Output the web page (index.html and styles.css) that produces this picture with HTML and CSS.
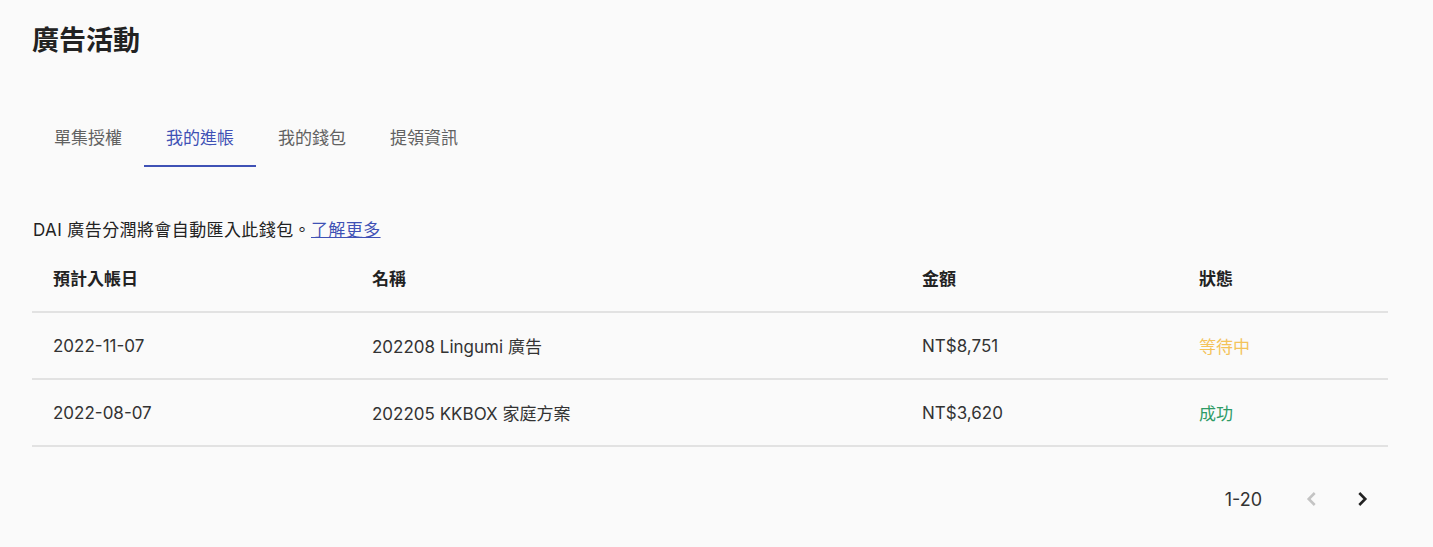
FILE: index.html
```html
<!DOCTYPE html>
<html lang="zh-Hant">
<head>
    <meta charset="UTF-8">
    <meta name="viewport" content="width=device-width, initial-scale=1.0">
    <title>廣告活動</title>
    <link rel="stylesheet" href="styles.css">
</head>
<body>
    <div class="page">
        <h1 class="page-title">廣告活動</h1>

        <nav class="tabs">
            <a class="tab">單集授權</a>
            <a class="tab active">我的進帳</a>
            <a class="tab">我的錢包</a>
            <a class="tab">提領資訊</a>
        </nav>

        <p class="notice">DAI 廣告分潤將會自動匯入此錢包。<a class="more-link" href="#">了解更多</a></p>

        <table class="income-table">
            <colgroup>
                <col class="col-date">
                <col class="col-name">
                <col class="col-amount">
                <col class="col-status">
            </colgroup>
            <thead>
                <tr>
                    <th>預計入帳日</th>
                    <th>名稱</th>
                    <th>金額</th>
                    <th>狀態</th>
                </tr>
            </thead>
            <tbody>
                <tr>
                    <td>2022-11-07</td>
                    <td>202208 Lingumi 廣告</td>
                    <td>NT$8,751</td>
                    <td class="status pending">等待中</td>
                </tr>
                <tr>
                    <td>2022-08-07</td>
                    <td>202205 KKBOX 家庭方案</td>
                    <td>NT$3,620</td>
                    <td class="status success">成功</td>
                </tr>
            </tbody>
        </table>

        <div class="pagination">
            <span class="page-range">1-20</span>
            <button class="page-btn" disabled>
                <svg viewBox="0 0 24 24" width="26" height="26"><path d="M14.5 6.5L9 12l5.5 5.5"/></svg>
            </button>
            <button class="page-btn">
                <svg viewBox="0 0 24 24" width="26" height="26"><path d="M9.5 6.5L15 12l-5.5 5.5"/></svg>
            </button>
        </div>
    </div>
</body>
</html>
```

FILE: styles.css
```css
body {
    margin: 0;
    background: #fafafa;
    color: #333;
    font-family: Inter, "Noto Sans CJK TC", sans-serif;
    font-size: 17px;
}

.page {
    padding: 25px 45px 0 32px;
}

.page-title {
    margin: 0;
    font-size: 27px;
    line-height: 32px;
    font-weight: 700;
    color: #222;
}

.tabs {
    display: flex;
    margin-top: 50px;
    height: 60px;
}

.tab {
    width: 112px;
    display: flex;
    align-items: center;
    justify-content: center;
    color: #616161;
    border-bottom: 2px solid transparent;
    box-sizing: border-box;
    cursor: pointer;
}

.tab.active {
    color: #3f51b5;
    border-bottom-color: #3f51b5;
}

.notice {
    margin: 51px 0 0 1px;
    line-height: 24px;
    color: #222;
    letter-spacing: 0.4px;
}

.more-link {
    color: #3f51b5;
    text-decoration: underline;
}

.income-table {
    width: 100%;
    border-collapse: collapse;
    margin-top: 1px;
}

.col-date { width: 319px; }
.col-name { width: 550px; }
.col-amount { width: 277px; }

.income-table th,
.income-table td {
    text-align: left;
    padding: 0 0 0 21px;
    border-bottom: 2px solid #e2e2e2;
}

.income-table th {
    height: 68px;
    font-weight: 700;
    color: #222;
}

.income-table td {
    height: 65px;
    color: #333;
}

.status.pending {
    color: #f4c35a;
}

.status.success {
    color: #2e9b66;
}

.pagination {
    display: flex;
    justify-content: flex-end;
    align-items: center;
    margin-top: 26px;
    height: 52px;
    padding-right: 6px;
}

.page-range {
    margin-right: 20px;
    font-size: 18px;
    color: #333;
}

.page-btn {
    width: 40px;
    height: 40px;
    border: none;
    background: none;
    padding: 0;
    display: flex;
    align-items: center;
    justify-content: center;
    cursor: pointer;
    margin-left: 10px;
}

.page-btn svg {
    fill: none;
    stroke: #222;
    stroke-width: 2.4;
}

.page-btn:disabled svg {
    stroke: #c4c4c4;
}
```
